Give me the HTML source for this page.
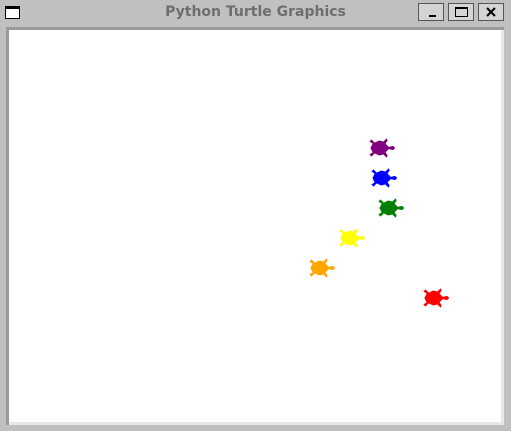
<!DOCTYPE html>
<html><head><style>
body{margin:0;width:511px;height:431px;background:#c0c0c0;position:relative;overflow:hidden;font-family:"DejaVu Sans","Liberation Sans",sans-serif}
.t{position:absolute;left:0;width:511px;top:4px;text-align:center;font-weight:bold;font-size:14px;color:#6e6e6e}
.b{position:absolute;top:3px;width:26px;height:18px;background:#d4d4d4;border:1px solid #555;box-sizing:border-box}
.frame{position:absolute;left:6px;top:27px;width:498px;height:398px;background:#e8e8e8;border-top:3px solid #9a9a9a;border-left:3px solid #9a9a9a;box-sizing:border-box}
.canvas{position:absolute;left:9px;top:30px;width:492px;height:392px;background:#fff}
</style></head><body>
<div style="position:absolute;left:5px;top:6px;width:15px;height:13px;border:1px solid #000;box-sizing:border-box;background:#fff;border-top:3px solid #000"></div>
<div class="t">Python Turtle Graphics</div>
<div class="b" style="left:418px"><div style="position:absolute;left:10px;top:11px;width:7px;height:2px;background:#000"></div></div>
<div class="b" style="left:448px"><div style="position:absolute;left:6px;top:3px;width:13px;height:10px;border:1px solid #000;border-top:2px solid #000;box-sizing:border-box"></div></div>
<div class="b" style="left:478px"><svg width="24" height="16" style="position:absolute;left:0;top:0"><path d="M8 4L16 12M16 4L8 12" stroke="#000" stroke-width="2"/></svg></div>
<div class="frame"></div>
<div class="canvas"></div>
<svg width="511" height="431" style="position:absolute;left:0;top:0">
<defs><polygon id="tu" transform="scale(1.08)" points="16,0 14,-2 10,-1 7,-4 9,-7 8,-9 5,-6 1,-7 -3,-5 -6,-8 -8,-6 -5,-4 -7,0 -5,4 -8,6 -6,8 -3,5 1,7 5,6 8,9 9,7 7,4 10,1 14,2"/></defs>
<use href="#tu" x="378" y="148" fill="#800080"/>
<use href="#tu" x="380" y="178" fill="#0000ff"/>
<use href="#tu" x="387" y="208" fill="#008000"/>
<use href="#tu" x="348" y="238" fill="#ffff00"/>
<use href="#tu" x="318" y="268" fill="#ffa500"/>
<use href="#tu" x="432" y="298" fill="#ff0000"/>
</svg>
</body></html>
